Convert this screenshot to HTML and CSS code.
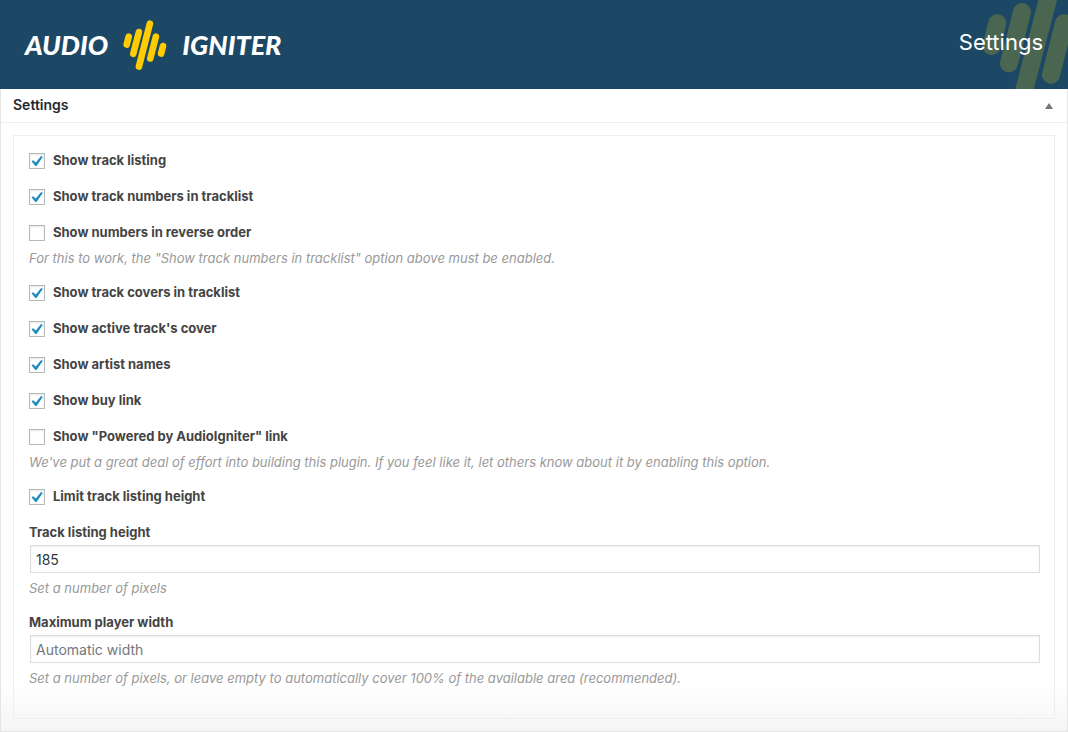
FILE: index.html
```
<!DOCTYPE html>
<html lang="en">
<head>
<meta charset="utf-8">
<meta name="viewport" content="width=device-width, initial-scale=1">
<title>AudioIgniter Settings</title>
<link rel="stylesheet" href="styles.css">
</head>
<body>
<header class="banner">
  <a class="brand" href="#" aria-label="Audio Igniter">
    <span>AUDIO</span>
    <svg class="brand-mark" width="44" height="50" viewBox="0 0 44 50" aria-hidden="true">
      <path d="M5.7 16.6 3.7 24.6M15.9 12 10.3 33.8M26.9 3.6 15.9 46.6M32.9 16.6 27.3 38.5M40 26 38.1 33.6"/>
    </svg>
    <span>IGNITER</span>
  </a>
  <svg class="banner-art" width="88" height="89" viewBox="0 0 88 89" aria-hidden="true">
    <path d="M17.3 23.3 11.5 46M42 12 29 63.3M72.4-18 39.8 107M84 23.3 71 74.7"/>
  </svg>
  <h1 class="banner-title">Settings</h1>
</header>
<main class="panel">
  <div class="panel-head">
    <h2 class="panel-title">Settings</h2>
    <button class="toggle" type="button" aria-label="Toggle panel" aria-expanded="true"></button>
  </div>
  <form class="fields">
    <div class="field"><label class="check"><input type="checkbox" checked>Show track listing</label></div>
    <div class="field"><label class="check"><input type="checkbox" checked>Show track numbers in tracklist</label></div>
    <div class="field"><label class="check"><input type="checkbox">Show numbers in reverse order</label>
      <p class="help">For this to work, the "Show track numbers in tracklist" option above must be enabled.</p></div>
    <div class="field"><label class="check"><input type="checkbox" checked>Show track covers in tracklist</label></div>
    <div class="field"><label class="check"><input type="checkbox" checked>Show active track's cover</label></div>
    <div class="field"><label class="check"><input type="checkbox" checked>Show artist names</label></div>
    <div class="field"><label class="check"><input type="checkbox" checked>Show buy link</label></div>
    <div class="field"><label class="check"><input type="checkbox">Show "Powered by AudioIgniter" link</label>
      <p class="help">We've put a great deal of effort into building this plugin. If you feel like it, let others know about it by enabling this option.</p></div>
    <div class="field"><label class="check"><input type="checkbox" checked>Limit track listing height</label></div>
    <div class="field"><label class="caption" for="height">Track listing height</label>
      <input class="text" id="height" type="text" value="185">
      <p class="help">Set a number of pixels</p></div>
    <div class="field"><label class="caption" for="width">Maximum player width</label>
      <input class="text" id="width" type="text" placeholder="Automatic width">
      <p class="help">Set a number of pixels, or leave empty to automatically cover 100% of the available area (recommended).</p></div>
  </form>
</main>
</body>
</html>
```
FILE: styles.css
```
* { box-sizing: border-box; }
body {
  margin: 0;
  background: #fff;
  color: #444;
  font: 13px/20px Inter, "Open Sans", sans-serif;
}
h1, h2, p { margin: 0; }

.banner {
  position: relative;
  display: flex;
  align-items: center;
  justify-content: space-between;
  height: 89px;
  padding: 0 25px;
  overflow: hidden;
  background: #1d4865;
  color: #fff;
}
.brand {
  display: flex;
  align-items: center;
  gap: 15px;
  padding-top: 1px;
  color: #fff;
  font: italic 900 27px/32px Lato, sans-serif;
  text-decoration: none;
}
.brand-mark path {
  fill: none;
  stroke: #fc0;
  stroke-width: 6.6;
  stroke-linecap: round;
}
.banner-art {
  position: absolute;
  top: 0;
  right: 0;
}
.banner-art path {
  fill: none;
  stroke: #4a6550;
  stroke-width: 18;
  stroke-linecap: round;
}
.banner-title {
  position: relative;
  padding-bottom: 5px;
  font: 400 22px/32px Inter, sans-serif;
}

.panel {
  border: 1px solid #e5e5e5;
  border-top: 0;
  background: linear-gradient(to top, #f5f5f5, #fff 48px);
}
.panel-head {
  display: flex;
  align-items: center;
  justify-content: space-between;
  height: 34px;
  padding: 0 12px;
  border-bottom: 1px solid #eee;
}
.panel-title {
  padding-bottom: 2px;
  color: #23282d;
  font-size: 14px;
  font-weight: 600;
}
.toggle {
  width: 12px;
  height: 20px;
  padding: 0;
  border: 0;
  background: none;
}
.toggle::before {
  content: "";
  display: block;
  margin: 1px auto 0;
  width: 8px;
  height: 6px;
  background: #72777c;
  clip-path: polygon(50% 0, 100% 100%, 0 100%);
}

.fields {
  margin: 12px;
  padding: 15px 14px 31px 15px;
  border: 1px solid #eee;
}
.field + .field { margin-top: 16px; }
.check, .caption {
  display: flex;
  align-items: flex-start;
  height: 20px;
  font-weight: 700;
  line-height: 18px;
}
.check input {
  display: grid;
  place-items: center;
  width: 16px;
  height: 16px;
  margin: 2px 8px 0 0;
  appearance: none;
  border: 1px solid #b4b9be;
  background: #fff;
  box-shadow: inset 0 1px 2px rgba(0, 0, 0, .1);
}
.check input:checked::before {
  content: "";
  width: 12px;
  height: 10px;
  background: #1e8cbe;
  clip-path: polygon(4% 52%, 18% 42%, 40% 66%, 84% 0, 98% 10%, 46% 100%, 36% 100%);
}
.text {
  display: block;
  width: calc(100% - 1px);
  height: 28px;
  margin: 2px 0 0 1px;
  padding: 0 5px;
  border: 1px solid #ddd;
  background: #fff;
  box-shadow: inset 0 1px 2px rgba(0, 0, 0, .07);
  color: #32373c;
  font: 14px/20px Inter, "Open Sans", sans-serif;
}
.text::placeholder { color: #72777c; }
.help {
  margin-top: 6px;
  color: #999;
  font-style: italic;
  line-height: 18px;
}
```
